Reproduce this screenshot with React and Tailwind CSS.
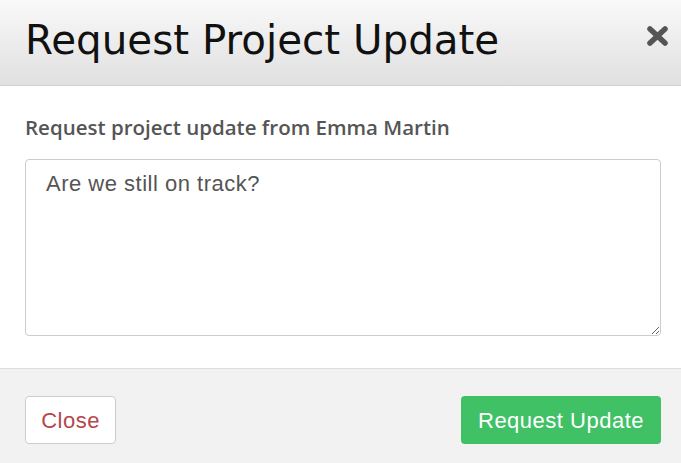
import React from "react";

const TITLE = { fontFamily: "'DejaVu Sans', 'Open Sans', sans-serif" };
const LABEL = { fontFamily: "'Open Sans', Lato, sans-serif" };
const BODY = { fontFamily: "'Liberation Sans', Arial, sans-serif" };

export default function App() {
  return (
    <div className="w-[681px] h-[463px] flex flex-col bg-white overflow-hidden">
      <div className="h-[86px] shrink-0 flex items-start justify-between pl-[25px] pr-[12px] pt-[20px] bg-gradient-to-b from-[#f9f9f9] to-[#e0e0e0] border-b border-[#cfcfcf]">
        <h1 className="text-[40.4px] leading-none text-[#111]" style={TITLE}>Request Project Update</h1>
        <svg width="23" height="22" viewBox="0 0 23 22" className="mt-[5px]">
          <path d="M4 4 L19 18 M19 4 L4 18" stroke="#555" strokeWidth="5.5" strokeLinecap="round" />
        </svg>
      </div>
      <div className="flex-1 px-[25px] pt-[31px]">
        <p className="text-[20.5px] font-semibold text-[#555] leading-none" style={LABEL}>
          Request project update from Emma Martin
        </p>
        <textarea
          className="block mt-[21px] w-[636px] h-[177px] border border-[#ccc] rounded-[4px] px-[20px] pt-[11px] text-[22px] tracking-[0.5px] text-[#555] leading-[26px] outline-none"
          defaultValue="Are we still on track?"
          style={BODY}
        />
      </div>
      <div className="h-[95px] shrink-0 bg-[#f2f2f2] border-t border-[#dedede] flex items-start justify-between pl-[25px] pr-[20px] pt-[27px]" style={BODY}>
        <button className="w-[91px] h-[48px] bg-white border border-[#ccc] rounded-[4px] text-[22px] tracking-[0.5px] text-[#b5474b]">
          Close
        </button>
        <button className="w-[200px] h-[48px] bg-[#40c166] rounded-[4px] text-[22px] tracking-[0.5px] text-white">
          Request Update
        </button>
      </div>
    </div>
  );
}
